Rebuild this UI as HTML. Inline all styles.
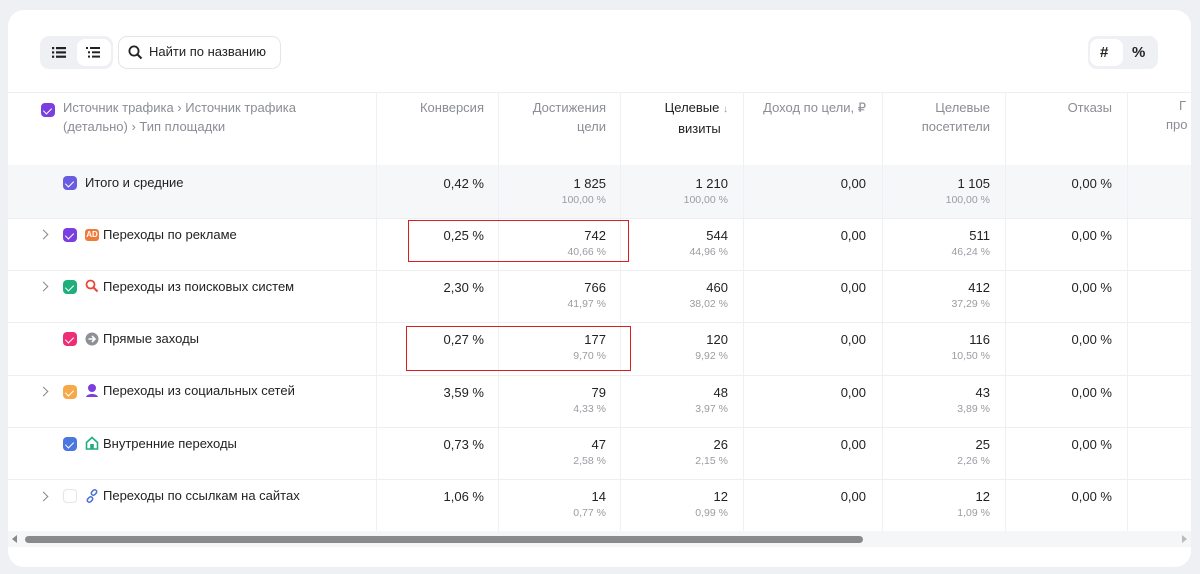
<!DOCTYPE html>
<html><head><meta charset="utf-8"><style>
*{box-sizing:border-box;margin:0;padding:0}
body{width:1200px;height:574px;background:#eef0f4;font-family:"Liberation Sans",sans-serif;position:relative;overflow:hidden;color:#222}
.card{position:absolute;left:8px;top:10px;width:1183px;height:557px;background:#fff;border-radius:16px;overflow:hidden}
.a{position:absolute;white-space:nowrap}
.vl{position:absolute;top:82px;height:447px;width:1px;background:#eef0f3}
.hl{position:absolute;left:0;width:1183px;height:1px;background:#eceef2}
.h{position:absolute;font-size:13px;color:#8a8d94;line-height:19px;text-align:right;white-space:nowrap}
.v{position:absolute;font-size:13px;color:#222;text-align:right;line-height:16px;white-space:nowrap}
.s{position:absolute;font-size:10.5px;color:#9a9ca2;text-align:right;white-space:nowrap}
.cb{position:absolute;width:14px;height:14px;border-radius:4px}
.cb:after{content:"";position:absolute;left:4px;top:2.5px;width:4px;height:7px;border:solid #fff;border-width:0 1.8px 1.8px 0;transform:rotate(45deg)}
.lab{position:absolute;font-size:13px;color:#222;white-space:nowrap}
.chev{position:absolute;width:7px;height:7px;border:solid #888;border-width:1.4px 1.4px 0 0;transform:rotate(45deg)}
.red{position:absolute;border:1.5px solid #d62020}
</style></head><body>
<div class="card">
 <div class="a" style="left:32px;top:26px;width:73px;height:33px;background:#eef0f4;border-radius:9px"></div>
 <div class="a" style="left:69px;top:29px;width:34px;height:27px;background:#fff;border-radius:8px"></div>
 <svg class="a" style="left:44px;top:37px" width="14" height="11"><g fill="#222"><rect x="0" y="0" width="2.2" height="2.2"/><rect x="0" y="4.3" width="2.2" height="2.2"/><rect x="0" y="8.6" width="2.2" height="2.2"/><rect x="4" y="0" width="10" height="2.2"/><rect x="4" y="4.3" width="10" height="2.2"/><rect x="4" y="8.6" width="10" height="2.2"/></g></svg>
 <svg class="a" style="left:78px;top:37px" width="14" height="11"><g fill="#222"><rect x="0" y="0" width="2" height="2"/><rect x="2" y="4.3" width="2" height="2"/><rect x="2" y="8.6" width="2" height="2"/><rect x="4" y="0" width="10" height="2"/><rect x="6" y="4.3" width="8" height="2"/><rect x="6" y="8.6" width="8" height="2"/></g></svg>
 <div class="a" style="left:110px;top:26px;width:163px;height:33px;border:1px solid #e3e5ea;border-radius:9px"></div>
 <svg class="a" style="left:120px;top:35px" width="15" height="15"><circle cx="6" cy="6" r="4.6" stroke="#222" stroke-width="1.8" fill="none"/><line x1="9.5" y1="9.5" x2="13.5" y2="13.5" stroke="#222" stroke-width="2"/></svg>
 <div class="a" style="left:141px;top:34px;font-size:13px;color:#222">Найти по названию</div>
 <div class="a" style="left:1080px;top:26px;width:70px;height:33px;background:#eef0f4;border-radius:9px"></div>
 <div class="a" style="left:1082px;top:29px;width:33px;height:27px;background:#fff;border-radius:8px"></div>
 <div class="a" style="left:1092px;top:34px;font-size:15px;font-weight:bold;color:#222">#</div>
 <div class="a" style="left:1124px;top:34px;font-size:15px;font-weight:bold;color:#222">%</div>

 <div class="hl" style="top:82px"></div>
 <div class="cb" style="left:33px;top:93px;background:#7b3fe0"></div>
 <div class="a" style="left:55px;top:88px;font-size:13px;color:#8a8d94;line-height:19px">Источник трафика › Источник трафика<br>(детально) › Тип площадки</div>
 <div class="h" style="left:376px;width:100px;top:88px">Конверсия</div>
 <div class="h" style="left:498px;width:100px;top:88px">Достижения<br>цели</div>
 <div class="h" style="left:620px;width:100px;top:88px;color:#222">Целевые <span style="color:#999;font-size:10px">↓</span><br>визиты&nbsp;&nbsp;</div>
 <div class="h" style="left:743px;width:115px;top:88px">Доход по цели, ₽</div>
 <div class="h" style="left:882px;width:100px;top:88px">Целевые<br>посетители</div>
 <div class="h" style="left:1005px;width:99px;top:88px">Отказы</div>
 <div class="a" style="left:1171px;top:88px;font-size:13px;color:#8a8d94">Г</div>
 <div class="a" style="left:1158px;top:107px;font-size:13px;color:#8a8d94">про</div>

 <div class="a" style="left:0;top:155px;width:1183px;height:53px;background:#f6f7f9"></div>
 <div class="hl" style="top:208px"></div><div class="hl" style="top:260px"></div><div class="hl" style="top:312px"></div><div class="hl" style="top:365px"></div><div class="hl" style="top:417px"></div><div class="hl" style="top:469px"></div>
 <div class="vl" style="left:368px"></div><div class="vl" style="left:490px"></div><div class="vl" style="left:612px"></div><div class="vl" style="left:735px"></div><div class="vl" style="left:874px"></div><div class="vl" style="left:997px"></div><div class="vl" style="left:1119px"></div>
</div>
<div style="position:absolute;left:0;top:0">
<div class="cb" style="left:63px;top:176px;background:#6a5ce0"></div>
<div class="lab" style="left:85px;top:175px">Итого и средние</div>

<div class="chev" style="left:40px;top:231px"></div>
<div class="cb" style="left:63px;top:228px;background:#7b3fe0"></div>
<div class="a" style="left:85px;top:229px;width:14px;height:12px;background:#f07a3a;border-radius:3px;color:#fff;font-size:8px;font-weight:bold;text-align:center;line-height:12px">AD</div>
<div class="lab" style="left:103px;top:227px">Переходы по рекламе</div>

<div class="chev" style="left:40px;top:283px"></div>
<div class="cb" style="left:63px;top:280px;background:#1fae7c"></div>
<svg class="a" style="left:85px;top:279px" width="14" height="14"><circle cx="5.5" cy="5.5" r="4" stroke="#e8483a" stroke-width="1.8" fill="none"/><line x1="8.5" y1="8.5" x2="12.5" y2="12.5" stroke="#e8483a" stroke-width="2"/></svg>
<div class="lab" style="left:103px;top:279px">Переходы из поисковых систем</div>

<div class="cb" style="left:63px;top:332px;background:#ee2d77"></div>
<svg class="a" style="left:85px;top:332px" width="14" height="14"><circle cx="7" cy="7" r="6.5" fill="#8e9097"/><path d="M3.5 7h6M7 4l3 3-3 3" stroke="#fff" stroke-width="1.6" fill="none"/></svg>
<div class="lab" style="left:103px;top:331px">Прямые заходы</div>

<div class="chev" style="left:40px;top:388px"></div>
<div class="cb" style="left:63px;top:385px;background:#f7a94a"></div>
<svg class="a" style="left:85px;top:383px" width="14" height="16"><circle cx="7" cy="5" r="4" fill="#7b3fe0"/><path d="M1 14c1-4 11-4 12 0z" fill="#7b3fe0"/></svg>
<div class="lab" style="left:103px;top:383px">Переходы из социальных сетей</div>

<div class="cb" style="left:63px;top:437px;background:#4a77e0"></div>
<svg class="a" style="left:85px;top:436px" width="14" height="14"><path d="M1.5 6.5L7 1.5l5.5 5V13h-11z" stroke="#1fae7c" stroke-width="1.6" fill="none"/><rect x="5.2" y="8" width="3.6" height="5" fill="#1fae7c"/></svg>
<div class="lab" style="left:103px;top:436px">Внутренние переходы</div>

<div class="chev" style="left:40px;top:493px"></div>
<div class="cb" style="left:63px;top:489px;border:1px solid #e3e5ea;background:#fff"></div>
<svg class="a" style="left:85px;top:489px" width="14" height="14"><g stroke="#4a6fd8" stroke-width="1.5" fill="none"><rect x="6" y="1.5" width="6" height="4" rx="2" transform="rotate(-45 9 3.5)"/><rect x="2" y="8.5" width="6" height="4" rx="2" transform="rotate(-45 5 10.5)"/></g></svg>
<div class="lab" style="left:103px;top:488px">Переходы по ссылкам на сайтах</div>
</div>

<div style="position:absolute;left:0;top:0">
<div class="v" style="left:384px;width:100px;top:176px">0,42 %</div><div class="v" style="left:506px;width:100px;top:176px">1 825</div><div class="s" style="left:506px;width:100px;top:194px">100,00 %</div><div class="v" style="left:628px;width:100px;top:176px">1 210</div><div class="s" style="left:628px;width:100px;top:194px">100,00 %</div><div class="v" style="left:766px;width:100px;top:176px">0,00</div><div class="v" style="left:890px;width:100px;top:176px">1 105</div><div class="s" style="left:890px;width:100px;top:194px">100,00 %</div><div class="v" style="left:1012px;width:100px;top:176px">0,00 %</div>

<div class="v" style="left:384px;width:100px;top:228px">0,25 %</div><div class="v" style="left:506px;width:100px;top:228px">742</div><div class="s" style="left:506px;width:100px;top:246px">40,66 %</div><div class="v" style="left:628px;width:100px;top:228px">544</div><div class="s" style="left:628px;width:100px;top:246px">44,96 %</div><div class="v" style="left:766px;width:100px;top:228px">0,00</div><div class="v" style="left:890px;width:100px;top:228px">511</div><div class="s" style="left:890px;width:100px;top:246px">46,24 %</div><div class="v" style="left:1012px;width:100px;top:228px">0,00 %</div>

<div class="v" style="left:384px;width:100px;top:280px">2,30 %</div><div class="v" style="left:506px;width:100px;top:280px">766</div><div class="s" style="left:506px;width:100px;top:298px">41,97 %</div><div class="v" style="left:628px;width:100px;top:280px">460</div><div class="s" style="left:628px;width:100px;top:298px">38,02 %</div><div class="v" style="left:766px;width:100px;top:280px">0,00</div><div class="v" style="left:890px;width:100px;top:280px">412</div><div class="s" style="left:890px;width:100px;top:298px">37,29 %</div><div class="v" style="left:1012px;width:100px;top:280px">0,00 %</div>

<div class="v" style="left:384px;width:100px;top:332px">0,27 %</div><div class="v" style="left:506px;width:100px;top:332px">177</div><div class="s" style="left:506px;width:100px;top:350px">9,70 %</div><div class="v" style="left:628px;width:100px;top:332px">120</div><div class="s" style="left:628px;width:100px;top:350px">9,92 %</div><div class="v" style="left:766px;width:100px;top:332px">0,00</div><div class="v" style="left:890px;width:100px;top:332px">116</div><div class="s" style="left:890px;width:100px;top:350px">10,50 %</div><div class="v" style="left:1012px;width:100px;top:332px">0,00 %</div>

<div class="v" style="left:384px;width:100px;top:385px">3,59 %</div><div class="v" style="left:506px;width:100px;top:385px">79</div><div class="s" style="left:506px;width:100px;top:403px">4,33 %</div><div class="v" style="left:628px;width:100px;top:385px">48</div><div class="s" style="left:628px;width:100px;top:403px">3,97 %</div><div class="v" style="left:766px;width:100px;top:385px">0,00</div><div class="v" style="left:890px;width:100px;top:385px">43</div><div class="s" style="left:890px;width:100px;top:403px">3,89 %</div><div class="v" style="left:1012px;width:100px;top:385px">0,00 %</div>

<div class="v" style="left:384px;width:100px;top:437px">0,73 %</div><div class="v" style="left:506px;width:100px;top:437px">47</div><div class="s" style="left:506px;width:100px;top:455px">2,58 %</div><div class="v" style="left:628px;width:100px;top:437px">26</div><div class="s" style="left:628px;width:100px;top:455px">2,15 %</div><div class="v" style="left:766px;width:100px;top:437px">0,00</div><div class="v" style="left:890px;width:100px;top:437px">25</div><div class="s" style="left:890px;width:100px;top:455px">2,26 %</div><div class="v" style="left:1012px;width:100px;top:437px">0,00 %</div>

<div class="v" style="left:384px;width:100px;top:489px">1,06 %</div><div class="v" style="left:506px;width:100px;top:489px">14</div><div class="s" style="left:506px;width:100px;top:507px">0,77 %</div><div class="v" style="left:628px;width:100px;top:489px">12</div><div class="s" style="left:628px;width:100px;top:507px">0,99 %</div><div class="v" style="left:766px;width:100px;top:489px">0,00</div><div class="v" style="left:890px;width:100px;top:489px">12</div><div class="s" style="left:890px;width:100px;top:507px">1,09 %</div><div class="v" style="left:1012px;width:100px;top:489px">0,00 %</div>

<div class="red" style="left:408px;top:220px;width:221px;height:42px"></div>
<div class="red" style="left:406px;top:326px;width:225px;height:45px"></div>

<div class="a" style="left:8px;top:531px;width:1183px;height:16px;background:#f5f6f8"></div>
<div class="a" style="left:25px;top:536px;width:838px;height:7px;background:#8a8a8a;border-radius:4px"></div>
<div class="a" style="left:12px;top:535px;width:0;height:0;border-top:4px solid transparent;border-bottom:4px solid transparent;border-right:5px solid #888"></div>
<div class="a" style="left:1182px;top:535px;width:0;height:0;border-top:4px solid transparent;border-bottom:4px solid transparent;border-left:5px solid #bbb"></div>
</div>
</body></html>
